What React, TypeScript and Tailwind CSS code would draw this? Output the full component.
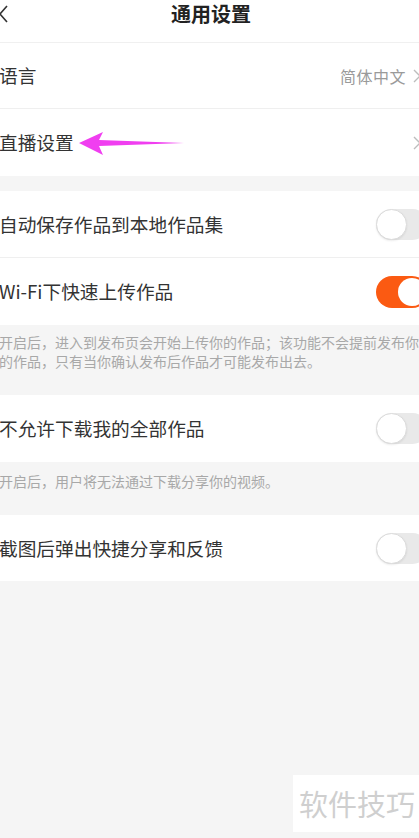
import React from "react";

const font = { fontFamily: '"Noto Sans CJK SC", "Noto Sans", sans-serif' };

function Toggle({ on }: { on?: boolean }) {
  if (on) {
    return (
      <div className="relative w-[52px] h-[32px] rounded-full bg-[#fb5a12] mr-[-9px] shrink-0">
        <div className="absolute right-[2px] top-[2px] w-[28px] h-[28px] rounded-full bg-white" />
      </div>
    );
  }
  return (
    <div className="relative w-[52px] h-[31px] rounded-full bg-[#e9e9e9] mr-[-9px] shrink-0">
      <div className="absolute left-0 top-0 w-[31px] h-[31px] rounded-full bg-white border border-[#dcdcdc] shadow-[0_1px_2px_rgba(0,0,0,0.08)]" />
    </div>
  );
}

function Chevron() {
  return (
    <svg width="8" height="14" viewBox="0 0 8 14" className="mr-[-4px] shrink-0">
      <path d="M1 1 L7 7 L1 13" fill="none" stroke="#bdbdbd" strokeWidth="1.4" />
    </svg>
  );
}

export default function App() {
  return (
    <div className="relative w-[419px] min-h-[838px] bg-[#f5f5f5] overflow-hidden text-[#333]" style={font}>
      {/* header */}
      <div className="relative h-[43px] bg-white border-b border-[#f0f0f0]">
        <svg width="10" height="18" viewBox="0 0 10 18" className="absolute left-[-1px] top-[5px]">
          <path d="M8 1 L1 9 L8 17" fill="none" stroke="#333" strokeWidth="1.6" />
        </svg>
        <div className="text-center text-[20px] leading-[28px] font-bold text-[#222] pl-[3px]">通用设置</div>
      </div>

      <div className="bg-white">
        <div className="h-[66px] flex items-center justify-between border-b border-[#efefef] pr-[2px] ml-[-1px]">
          <span className="text-[18.7px]">语言</span>
          <div className="flex items-center gap-[7px]">
            <span className="text-[16px] text-[#9a9a9a] tracking-[0.5px]">简体中文</span>
            <Chevron />
          </div>
        </div>
        <div className="relative h-[67px] flex items-center justify-between pr-[2px] ml-[-1px]">
          <span className="text-[18.7px]">直播设置</span>
          <Chevron />
          <svg width="110" height="30" viewBox="0 0 110 30" className="absolute left-[79px] top-[18px]">
            <polygon points="1,26 25,15 21,23 106,26 21,29 25,38" fill="#f03ef0" transform="translate(0,-10)" />
          </svg>
        </div>
      </div>

      <div className="h-[15px]" />

      <div className="bg-white">
        <div className="h-[67px] flex items-center justify-between border-b border-[#efefef] overflow-hidden ml-[-1px]">
          <span className="text-[18.7px]">自动保存作品到本地作品集</span>
          <Toggle />
        </div>
        <div className="h-[67px] flex items-center justify-between overflow-hidden ml-[-1px]">
          <span className="text-[18.7px]">Wi-Fi下快速上传作品</span>
          <Toggle on />
        </div>
      </div>

      <div className="h-[70px] pt-[8px] text-[14px] leading-[19px] text-[#a8a8a8] ml-[-1px] whitespace-nowrap">
        开启后，进入到发布页会开始上传你的作品；该功能不会提前发布你
        <br />
        的作品，只有当你确认发布后作品才可能发布出去。
      </div>

      <div className="bg-white">
        <div className="h-[67px] flex items-center justify-between overflow-hidden ml-[-1px]">
          <span className="text-[18.7px]">不允许下载我的全部作品</span>
          <Toggle />
        </div>
      </div>

      <div className="h-[53px] pt-[10px] text-[14px] leading-[19px] text-[#a8a8a8] ml-[-1px]">
        开启后，用户将无法通过下载分享你的视频。
      </div>

      <div className="bg-white">
        <div className="h-[66px] flex items-center justify-between overflow-hidden ml-[-1px]">
          <span className="text-[18.7px]">截图后弹出快捷分享和反馈</span>
          <Toggle />
        </div>
      </div>

      {/* watermark */}
      <div className="absolute left-[293px] top-[775px] w-[126px] h-[57px] bg-white flex items-center justify-center">
        <span className="text-[29px] text-[#cfcfcf] leading-none pl-[2px]">软件技巧</span>
      </div>
    </div>
  );
}
